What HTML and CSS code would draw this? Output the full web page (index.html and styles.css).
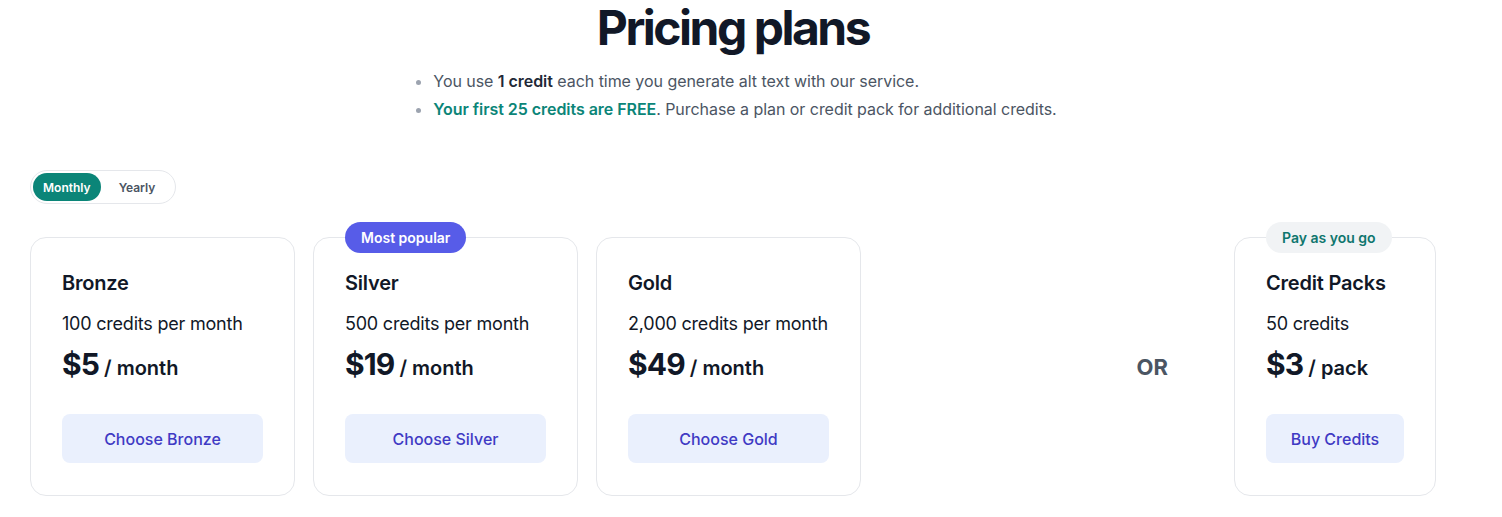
FILE: index.html
```html
<!doctype html>
<html lang="en">

<head>
  <meta charset="UTF-8" />
  <meta name="viewport" content="width=device-width, initial-scale=1.0" />
  <title>Pricing plans</title>
  <link rel="stylesheet" href="styles.css">
</head>

<body>
  <header class="intro">
    <h1>Pricing plans</h1>
    <ul class="notes">
      <li>You use <strong>1 credit</strong> each time you generate alt text with our service.</li>
      <li><span class="free">Your first 25 credits are FREE</span>. Purchase a plan or credit pack for additional credits.</li>
    </ul>
  </header>

  <div class="toggle">
    <button class="toggle-btn active">Monthly</button>
    <button class="toggle-btn yearly">Yearly</button>
  </div>

  <section class="plans">
    <div class="plan">
      <h2>Bronze</h2>
      <p class="credits">100 credits per month</p>
      <p class="price"><span class="amount">$5</span> / month</p>
      <button class="choose">Choose Bronze</button>
    </div>
    <div class="plan">
      <span class="badge popular">Most popular</span>
      <h2>Silver</h2>
      <p class="credits">500 credits per month</p>
      <p class="price"><span class="amount">$19</span> / month</p>
      <button class="choose">Choose Silver</button>
    </div>
    <div class="plan">
      <h2>Gold</h2>
      <p class="credits">2,000 credits per month</p>
      <p class="price"><span class="amount">$49</span> / month</p>
      <button class="choose">Choose Gold</button>
    </div>

    <div class="or">OR</div>

    <div class="plan pack">
      <span class="badge payg">Pay as you go</span>
      <h2>Credit Packs</h2>
      <p class="credits">50 credits</p>
      <p class="price"><span class="amount">$3</span> / pack</p>
      <button class="choose">Buy Credits</button>
    </div>
  </section>
</body>

</html>
```

FILE: styles.css
```css
:root {
  --text-dark: #111827;
  --text-gray: #4b5563;
  --border: #e5e7eb;
  --teal: #0b8578;
  --indigo: #575ce8;
  --btn-bg: #eaf0fd;
  --btn-text: #3f3ac4;
}

* {
  margin: 0;
  padding: 0;
  box-sizing: border-box;
}

body {
  font-family: Inter, "Noto Sans", sans-serif;
  color: var(--text-dark);
  background: #fff;
  padding: 4px 30px 0;
}

.intro {
  display: flex;
  flex-direction: column;
  align-items: center;
  padding-right: 36px;
}

h1 {
  font-size: 48px;
  line-height: 48px;
  font-weight: 700;
  letter-spacing: -0.052em;
}

.notes {
  margin-top: 15px;
  padding-left: 24px;
  font-size: 16px;
  line-height: 28px;
  color: var(--text-gray);
  letter-spacing: -0.003em;
}

.notes li::marker {
  color: #9ca3af;
}

.notes strong {
  font-weight: 600;
  color: #1f2937;
}

.free {
  color: var(--teal);
  font-weight: 600;
}

.toggle {
  display: inline-flex;
  margin-top: 47px;
  padding: 2px;
  border: 1px solid var(--border);
  border-radius: 999px;
}

.toggle-btn {
  height: 28px;
  border: none;
  background: transparent;
  border-radius: 999px;
  font-family: inherit;
  font-size: 12px;
  font-weight: 600;
  color: var(--text-gray);
  padding: 0 10px;
  cursor: pointer;
}

.toggle-btn.active {
  background: var(--teal);
  color: #fff;
}

.toggle-btn.yearly {
  padding: 0 18px;
}

.plans {
  display: flex;
  align-items: stretch;
  gap: 18px;
  margin-top: 33px;
}

.plan {
  position: relative;
  width: 265px;
  border: 1px solid var(--border);
  border-radius: 16px;
  padding: 31px 31px 32px;
  display: flex;
  flex-direction: column;
}

.plan.pack {
  width: 202px;
}

h2 {
  font-size: 20px;
  line-height: 28px;
  font-weight: 600;
  letter-spacing: -0.01em;
}

.credits {
  margin-top: 13px;
  font-size: 18px;
  line-height: 28px;
  letter-spacing: -0.012em;
  white-space: nowrap;
}

.price {
  margin-top: 8px;
  font-size: 20px;
  line-height: 36px;
  font-weight: 600;
  white-space: nowrap;
}

.amount {
  font-size: 30px;
  font-weight: 700;
  letter-spacing: -0.03em;
}

.choose {
  margin-top: 28px;
  height: 49px;
  border: none;
  border-radius: 8px;
  background: var(--btn-bg);
  color: var(--btn-text);
  font-family: inherit;
  font-size: 16px;
  font-weight: 500;
  cursor: pointer;
}

.badge {
  position: absolute;
  top: -16px;
  left: 31px;
  height: 31px;
  padding: 0 16px;
  border-radius: 999px;
  font-size: 14px;
  font-weight: 600;
  line-height: 31px;
}

.badge.popular {
  background: var(--indigo);
  color: #fff;
}

.badge.payg {
  background: #f1f3f5;
  color: #0f766e;
}

.or {
  align-self: center;
  width: 337px;
  text-align: right;
  padding-right: 48px;
  font-size: 22px;
  font-weight: 700;
  color: var(--text-gray);
}
```
